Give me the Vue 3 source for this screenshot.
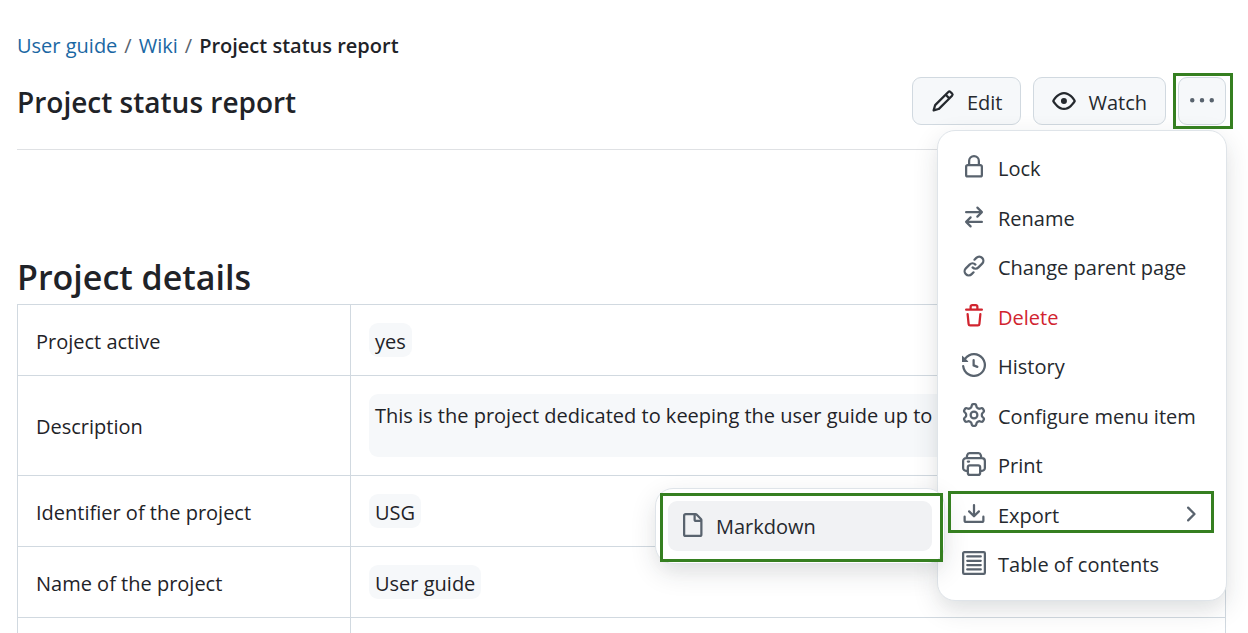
<script setup>
const icons = {
  pencil: 'M11.013 1.427a1.75 1.75 0 0 1 2.474 0l1.086 1.086a1.75 1.75 0 0 1 0 2.474l-8.61 8.61c-.21.21-.47.364-.756.445l-3.251.93a.75.75 0 0 1-.927-.928l.929-3.25c.081-.286.235-.547.445-.758l8.61-8.61Zm.176 4.823L9.75 4.81l-6.286 6.287a.253.253 0 0 0-.064.108l-.558 1.953 1.953-.558a.253.253 0 0 0 .108-.064Zm1.238-3.763a.25.25 0 0 0-.354 0L10.811 3.75l1.439 1.44 1.263-1.263a.25.25 0 0 0 0-.354Z',
  eye: 'M8 2c1.981 0 3.671.992 4.933 2.078 1.27 1.091 2.187 2.345 2.637 3.023a1.62 1.62 0 0 1 0 1.798c-.45.678-1.367 1.932-2.637 3.023C11.67 13.008 9.981 14 8 14c-1.981 0-3.671-.992-4.933-2.078C1.797 10.83.88 9.576.43 8.898a1.62 1.62 0 0 1 0-1.798c.45-.677 1.367-1.931 2.637-3.022C4.33 2.992 6.019 2 8 2ZM1.679 7.932a.12.12 0 0 0 0 .136c.411.622 1.241 1.75 2.366 2.717C5.176 11.758 6.527 12.5 8 12.5c1.473 0 2.825-.742 3.955-1.715 1.124-.967 1.954-2.096 2.366-2.717a.12.12 0 0 0 0-.136c-.412-.621-1.242-1.75-2.366-2.717C10.824 4.242 9.473 3.5 8 3.5c-1.473 0-2.825.742-3.955 1.715-1.124.967-1.954 2.096-2.366 2.717ZM8 10a2 2 0 1 1-.001-3.999A2 2 0 0 1 8 10Z',
  kebab: 'M8 9a1.5 1.5 0 1 0 0-3 1.5 1.5 0 0 0 0 3ZM1.5 9a1.5 1.5 0 1 0 0-3 1.5 1.5 0 0 0 0 3Zm13 0a1.5 1.5 0 1 0 0-3 1.5 1.5 0 0 0 0 3Z',
  lock: 'M4 4a4 4 0 0 1 8 0v2h.25c.966 0 1.75.784 1.75 1.75v5.5A1.75 1.75 0 0 1 12.25 15h-8.5A1.75 1.75 0 0 1 2 13.25v-5.5C2 6.784 2.784 6 3.75 6H4Zm8.25 3.5h-8.5a.25.25 0 0 0-.25.25v5.5c0 .138.112.25.25.25h8.5a.25.25 0 0 0 .25-.25v-5.5a.25.25 0 0 0-.25-.25ZM10.5 6V4a2.5 2.5 0 1 0-5 0v2Z',
  swap: 'M5.22 14.78a.75.75 0 0 0 1.06-1.06L4.56 12h8.69a.75.75 0 0 0 0-1.5H4.56l1.72-1.72a.75.75 0 0 0-1.06-1.06l-3 3a.75.75 0 0 0 0 1.06l3 3Zm5.56-6.5a.75.75 0 1 1-1.06-1.06l1.72-1.72H2.75a.75.75 0 0 1 0-1.5h8.69L9.72 2.28a.75.75 0 0 1 1.06-1.06l3 3a.75.75 0 0 1 0 1.06l-3 3Z',
  link: 'm7.775 3.275 1.25-1.25a3.5 3.5 0 1 1 4.95 4.95l-2.5 2.5a3.5 3.5 0 0 1-4.95 0 .751.751 0 0 1 .018-1.042.751.751 0 0 1 1.042-.018 1.998 1.998 0 0 0 2.83 0l2.5-2.5a2.002 2.002 0 0 0-2.83-2.83l-1.25 1.25a.751.751 0 0 1-1.042-.018.751.751 0 0 1-.018-1.042Zm-4.69 9.64a1.998 1.998 0 0 0 2.83 0l1.25-1.25a.751.751 0 0 1 1.042.018.751.751 0 0 1 .018 1.042l-1.25 1.25a3.5 3.5 0 1 1-4.95-4.95l2.5-2.5a3.5 3.5 0 0 1 4.95 0 .751.751 0 0 1-.018 1.042.751.751 0 0 1-1.042.018 1.998 1.998 0 0 0-2.83 0l-2.5 2.5a1.998 1.998 0 0 0 0 2.83Z',
  trash: 'M11 1.75V3h2.25a.75.75 0 0 1 0 1.5H2.75a.75.75 0 0 1 0-1.5H5V1.75C5 .784 5.784 0 6.75 0h2.5C10.216 0 11 .784 11 1.75ZM4.496 6.675l.66 6.6a.25.25 0 0 0 .249.225h5.19a.25.25 0 0 0 .249-.225l.66-6.6a.75.75 0 0 1 1.492.149l-.66 6.6A1.748 1.748 0 0 1 10.595 15h-5.19a1.75 1.75 0 0 1-1.741-1.575l-.66-6.6a.75.75 0 1 1 1.492-.15ZM6.5 1.75V3h3V1.75a.25.25 0 0 0-.25-.25h-2.5a.25.25 0 0 0-.25.25Z',
  history: 'm.427 1.927 1.215 1.215a8.002 8.002 0 1 1-1.6 5.685.75.75 0 1 1 1.493-.154 6.5 6.5 0 1 0 1.18-4.458l1.358 1.358A.25.25 0 0 1 3.896 6H.25A.25.25 0 0 1 0 5.75V2.104a.25.25 0 0 1 .427-.177ZM7.75 4a.75.75 0 0 1 .75.75v2.992l2.028.812a.75.75 0 0 1-.557 1.392l-2.5-1A.751.751 0 0 1 7 8.25v-3.5A.75.75 0 0 1 7.75 4Z',
  gear: 'M8 0a8.2 8.2 0 0 1 .701.031C9.444.095 9.99.645 10.16 1.29l.288 1.107c.018.066.079.158.212.224.231.114.454.243.668.386.123.082.233.09.299.071l1.103-.303c.644-.176 1.392.021 1.82.63.27.385.506.792.704 1.218.315.675.111 1.422-.364 1.891l-.814.806c-.049.048-.098.147-.088.294.016.257.016.515 0 .772-.01.147.038.246.088.294l.814.806c.475.469.679 1.216.364 1.891a7.977 7.977 0 0 1-.704 1.217c-.428.61-1.176.807-1.82.63l-1.102-.302c-.067-.019-.177-.011-.3.071a5.909 5.909 0 0 1-.668.386c-.133.066-.194.158-.211.224l-.29 1.106c-.168.646-.715 1.196-1.458 1.26a8.006 8.006 0 0 1-1.402 0c-.743-.064-1.289-.614-1.458-1.26l-.289-1.106c-.018-.066-.079-.158-.212-.224a5.738 5.738 0 0 1-.668-.386c-.123-.082-.233-.09-.299-.071l-1.103.303c-.644.176-1.392-.021-1.82-.63a8.12 8.12 0 0 1-.704-1.218c-.315-.675-.111-1.422.363-1.891l.815-.806c.05-.048.098-.147.088-.294a6.214 6.214 0 0 1 0-.772c.01-.147-.038-.246-.088-.294l-.815-.806C.635 6.045.431 5.298.746 4.623a7.92 7.92 0 0 1 .704-1.217c.428-.61 1.176-.807 1.82-.63l1.102.302c.067.019.177.011.3-.071.214-.143.437-.272.668-.386.133-.066.194-.158.211-.224l.29-1.106C6.009.645 6.556.095 7.299.03 7.53.01 7.764 0 8 0Zm-.571 1.525c-.036.003-.108.036-.137.146l-.289 1.105c-.147.561-.549.967-.998 1.189-.173.086-.34.183-.5.29-.417.278-.97.423-1.529.27l-1.103-.303c-.109-.03-.175.016-.195.045-.22.312-.412.644-.573.99-.014.031-.021.11.059.19l.815.806c.411.406.562.957.53 1.456a4.709 4.709 0 0 0 0 .582c.032.499-.119 1.05-.53 1.456l-.815.806c-.081.08-.073.159-.059.19.162.346.353.677.573.989.02.03.085.076.195.046l1.102-.303c.56-.153 1.113-.008 1.53.27.161.107.328.204.501.29.447.222.85.629.997 1.189l.289 1.105c.029.109.101.143.137.146a6.6 6.6 0 0 0 1.142 0c.036-.003.108-.036.137-.146l.289-1.105c.147-.561.549-.967.998-1.189.173-.086.34-.183.5-.29.417-.278.97-.423 1.529-.27l1.103.303c.109.029.175-.016.195-.045.22-.313.411-.644.573-.99.014-.031.021-.11-.059-.19l-.815-.806c-.411-.406-.562-.957-.53-1.456a4.709 4.709 0 0 0 0-.582c-.032-.499.119-1.05.53-1.456l.815-.806c.081-.08.073-.159.059-.19a6.464 6.464 0 0 0-.573-.989c-.02-.03-.085-.076-.195-.046l-1.102.303c-.56.153-1.113.008-1.53-.27a4.44 4.44 0 0 0-.501-.29c-.447-.222-.85-.629-.997-1.189l-.289-1.105c-.029-.11-.101-.143-.137-.146a6.6 6.6 0 0 0-1.142 0ZM11 8a3 3 0 1 1-6 0 3 3 0 0 1 6 0ZM9.5 8a1.5 1.5 0 1 0-3.001.001A1.5 1.5 0 0 0 9.5 8Z',
  download: 'M2.75 14A1.75 1.75 0 0 1 1 12.25v-2.5a.75.75 0 0 1 1.5 0v2.5c0 .138.112.25.25.25h10.5a.25.25 0 0 0 .25-.25v-2.5a.75.75 0 0 1 1.5 0v2.5A1.75 1.75 0 0 1 13.25 14ZM7.25 7.689V2a.75.75 0 0 1 1.5 0v5.689l1.97-1.969a.749.749 0 1 1 1.06 1.06l-3.25 3.25a.749.749 0 0 1-1.06 0L4.22 6.78a.749.749 0 1 1 1.06-1.06l1.97 1.969Z',
  file: 'M2 1.75C2 .784 2.784 0 3.75 0h6.586c.464 0 .909.184 1.237.513l2.914 2.914c.329.328.513.773.513 1.237v9.586A1.75 1.75 0 0 1 13.25 16h-9.5A1.75 1.75 0 0 1 2 14.25Zm1.75-.25a.25.25 0 0 0-.25.25v12.5c0 .138.112.25.25.25h9.5a.25.25 0 0 0 .25-.25V6h-2.75A1.75 1.75 0 0 1 9 4.25V1.5Zm6.75.062V4.25c0 .138.112.25.25.25h2.688l-.011-.013-2.914-2.914-.013-.011Z',
  chevron: 'M6.22 3.22a.75.75 0 0 1 1.06 0l4.25 4.25a.75.75 0 0 1 0 1.06l-4.25 4.25a.751.751 0 0 1-1.042-.018.751.751 0 0 1-.018-1.042L9.94 8 6.22 4.28a.75.75 0 0 1 0-1.06Z',
}

const outlines = {
  print: 'M3.100 3.900 3.500 2c.2-.8.700-1.250 1.500-1.250h6c.8 0 1.300.450 1.500 1.250l.4 1.900M3.600 12.500h-.9A1.900 1.900 0 0 1 .75 10.600V6a1.950 1.950 0 0 1 1.950-1.950h10.600A1.950 1.950 0 0 1 15.250 6v4.600a1.900 1.900 0 0 1-1.950 1.900h-.9M5.200 8.900h5.600c.8 0 1.300.5 1.300 1.300v3.750c0 .8-.5 1.300-1.300 1.300H5.200c-.8 0-1.300-.5-1.300-1.300V10.200c0-.8.500-1.300 1.300-1.300ZM3.900 6.400h.8',
  contents: 'M1.500.75h13a.75.75 0 0 1 .75.75v13a.75.75 0 0 1-.75.75h-13a.75.75 0 0 1-.75-.75v-13A.75.75 0 0 1 1.500.75ZM3.500 3.600h9M3.500 6.500h9M3.500 9.400h9M3.500 12.300h9',
}

const menu = [
  { label: 'Lock', icon: 'lock' },
  { label: 'Rename', icon: 'swap' },
  { label: 'Change parent page', icon: 'link' },
  { label: 'Delete', icon: 'trash', danger: true },
  { label: 'History', icon: 'history' },
  { label: 'Configure menu item', icon: 'gear' },
  { label: 'Print', icon: 'print' },
  { label: 'Export', icon: 'download', submenu: true },
  { label: 'Table of contents', icon: 'contents' },
]

const rows = [
  { name: 'Project active', value: 'yes' },
  { name: 'Description', value: 'This is the project dedicated to keeping the user guide up to', block: true },
  { name: 'Identifier of the project', value: 'USG' },
  { name: 'Name of the project', value: 'User guide' },
  { name: '', value: '' },
]
</script>

<template>
  <main class="page">
    <nav class="crumbs" aria-label="Breadcrumb">
      <a href="#">User guide</a><span class="sep">/</span><a href="#">Wiki</a><span class="sep">/</span><strong>Project status report</strong>
    </nav>

    <header class="head">
      <h1>Project status report</h1>
      <div class="actions">
        <button type="button" class="btn">
          <svg class="icon" viewBox="0 0 16 16" aria-hidden="true"><path :d="icons.pencil" /></svg>
          <span class="caption">Edit</span>
        </button>
        <button type="button" class="btn">
          <svg class="icon" viewBox="0 0 16 16" aria-hidden="true"><path :d="icons.eye" /></svg>
          <span class="caption">Watch</span>
        </button>
        <div class="more">
          <button type="button" class="btn square" aria-label="More actions" aria-expanded="true">
            <svg class="icon" viewBox="0 0 16 16" aria-hidden="true"><path :d="icons.kebab" /></svg>
          </button>
          <div class="menu" role="menu">
            <div v-for="item in menu" :key="item.label" class="entry" :class="{ marked: item.submenu }">
              <button type="button" role="menuitem" class="item" :class="{ danger: item.danger }">
                <svg class="icon" viewBox="0 0 16 16" aria-hidden="true">
                  <path v-if="icons[item.icon]" :d="icons[item.icon]" />
                  <path v-else class="outline" :d="outlines[item.icon]" />
                </svg>
                <span class="label">{{ item.label }}</span>
                <svg v-if="item.submenu" class="icon" viewBox="0 0 16 16" aria-hidden="true"><path :d="icons.chevron" /></svg>
              </button>
              <div v-if="item.submenu" class="submenu" role="menu">
                <button type="button" role="menuitem" class="item active">
                  <svg class="icon" viewBox="0 0 16 16" aria-hidden="true"><path :d="icons.file" /></svg>
                  <span class="label">Markdown</span>
                </button>
              </div>
            </div>
          </div>
        </div>
      </div>
    </header>

    <section class="details">
      <h2>Project details</h2>
      <table>
        <tbody>
          <tr v-for="row in rows" :key="row.name">
            <th scope="row">{{ row.name }}</th>
            <td><span class="value" :class="{ block: row.block }">{{ row.value }}</span></td>
          </tr>
        </tbody>
      </table>
    </section>
  </main>
</template>

<style>
html {
  overflow: hidden;
}

body {
  background: #fff;
}
</style>

<style scoped>
.page {
  box-sizing: border-box;
  height: 100vh;
  overflow: hidden;
  padding: 31px 22px 0 17px;
  font: 20px/30px "Segoe UI", "Open Sans", "Noto Sans", sans-serif;
  color: #1f2328;
}

.crumbs a {
  color: #1a67a3;
  text-decoration: none;
}

.crumbs strong {
  font-weight: 600;
}

.sep {
  margin: 0 7px;
  color: #59636e;
}

.head {
  display: flex;
  align-items: flex-start;
  justify-content: space-between;
  padding: 16px 0 22px;
  border-bottom: 1px solid #dfe1e4;
}

h1 {
  margin: 0;
  font-size: 28px;
  line-height: 50px;
  font-weight: 600;
}

.actions {
  display: flex;
  gap: 12px;
}

.btn {
  display: flex;
  align-items: center;
  gap: 12px;
  box-sizing: border-box;
  height: 48px;
  padding: 0 18px;
  border: 1px solid #d1d9e0;
  border-radius: 9px;
  background: #f6f8fa;
  color: #25292e;
  font: inherit;
}

.caption {
  padding-top: 3px;
}

.square {
  width: 48px;
  padding: 0 11px;
  color: #59636e;
}

.icon {
  flex: none;
  width: 24px;
  height: 24px;
  fill: currentColor;
}

.outline {
  fill: none;
  stroke: currentColor;
  stroke-width: 1.5;
  stroke-linecap: round;
  stroke-linejoin: round;
}

.more {
  position: relative;
}

.more::after,
.marked::after,
.submenu::after {
  content: "";
  position: absolute;
  border: 3px solid #357f20;
  pointer-events: none;
}

.more::after {
  inset: -4px -7px -4px -5px;
}

.marked::after {
  inset: 1px 0 6px -2px;
}

.submenu::after {
  inset: 4px 1px 1px 4px;
}

.menu,
.submenu {
  box-sizing: border-box;
  width: 290px;
  padding: 12px;
  border: 1px solid #dfe4e9;
  border-radius: 18px;
  background: #fff;
  box-shadow: 0 9px 18px -3px rgba(37, 41, 46, 0.04), 0 9px 27px rgba(37, 41, 46, 0.12);
}

.menu {
  position: absolute;
  top: 53px;
  right: -1px;
  display: grid;
  grid-auto-rows: 1fr;
  height: 471px;
  padding-bottom: 11px;
}

.entry {
  position: relative;
  min-height: 0;
}

.item {
  display: flex;
  align-items: flex-start;
  gap: 12px;
  box-sizing: border-box;
  width: 100%;
  height: 100%;
  padding: 11px 12px 0;
  border: 0;
  border-radius: 9px;
  background: transparent;
  color: #25292e;
  font: inherit;
  text-align: left;
}

.item .icon {
  margin-top: 1px;
  color: #59636e;
}

.label {
  flex: 1;
}

.item.danger,
.item.danger .icon {
  color: #d1242f;
}

.submenu {
  position: absolute;
  top: -2px;
  right: calc(100% + 5px);
}

.item.active {
  height: 50px;
  background: #f1f2f4;
}

.details {
  padding-top: 100px;
}

h2 {
  margin: 0;
  font-size: 34px;
  line-height: 54px;
  font-weight: 600;
}

table {
  width: 100%;
  border-collapse: collapse;
  table-layout: fixed;
}

th,
td {
  padding: 18px;
  border: 1px solid #d1d9e0;
  font-weight: 400;
  text-align: left;
}

th {
  width: 296px;
  padding-top: 21px;
}

.value {
  display: inline-block;
  padding: 4px 6px 0;
  border-radius: 9px;
  background: #f6f8fa;
}

.block {
  display: block;
  padding: 7px 6px 26px;
}
</style>
